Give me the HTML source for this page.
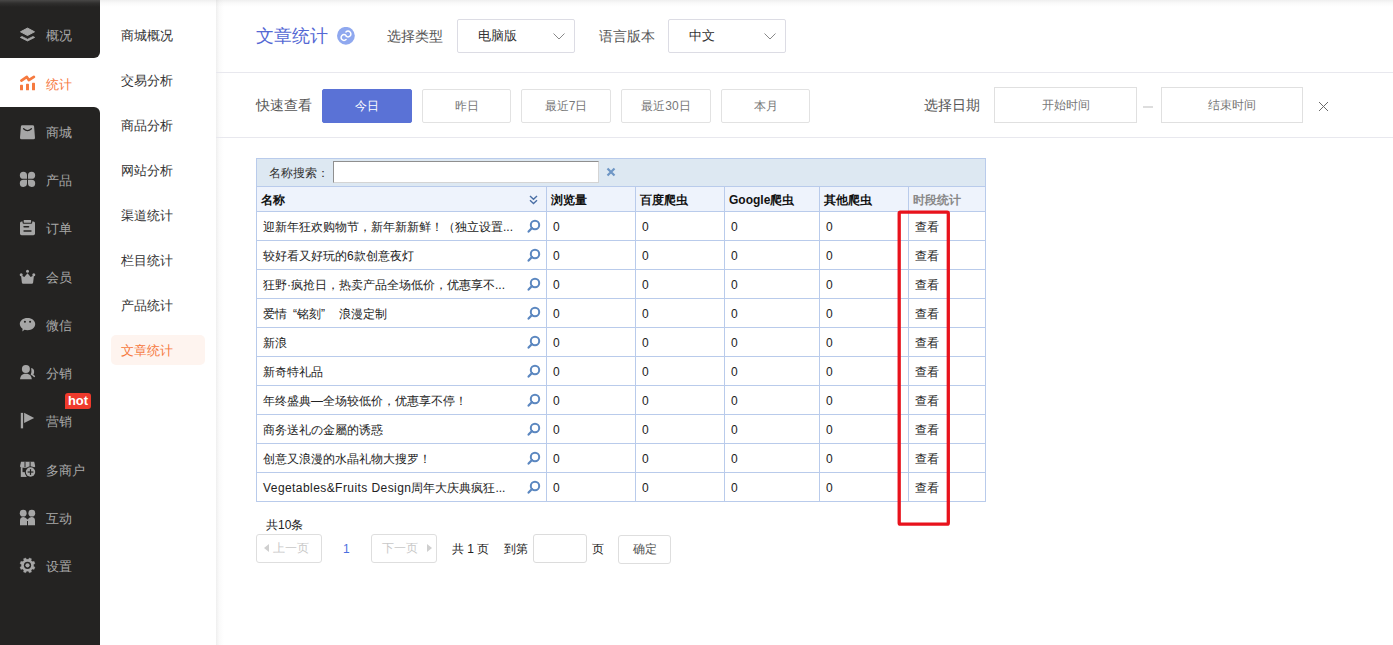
<!DOCTYPE html>
<html><head><meta charset="utf-8">
<style>
*{margin:0;padding:0;box-sizing:border-box}
html,body{width:1393px;height:645px;overflow:hidden;background:#fff;font-family:"Liberation Sans",sans-serif;color:#333}
.abs{position:absolute}
.d1{position:absolute;left:0;top:0;width:100px;height:58px;background:#242322;border-bottom-right-radius:6px}
.d2{position:absolute;left:0;top:107px;width:100px;height:538px;background:#242322;border-top-right-radius:6px}
.nt{position:absolute;left:46px;font-size:13px;line-height:19px;white-space:nowrap}
.hot{position:absolute;left:65px;top:393px;width:26px;height:16px;background:#f03a2c;border-radius:3px 3px 3px 0;color:#fff;font-size:13px;font-weight:bold;line-height:16px;text-align:center}
.si{position:absolute;left:121px;font-size:13px;line-height:18px;white-space:nowrap}
.sact{position:absolute;left:111px;top:335px;width:94px;height:30px;background:#fef4ef;border-radius:5px}
#vshadow{position:absolute;left:216px;top:0;width:8px;height:645px;background:linear-gradient(to right,#efefef,rgba(245,245,245,.5) 40%,rgba(255,255,255,0))}
#tshadow{position:absolute;left:0;top:0;width:1393px;height:7px;background:linear-gradient(to bottom,rgba(188,188,188,.24),rgba(188,188,188,.08) 45%,rgba(188,188,188,0))}
.hl{position:absolute;left:216px;width:1177px;height:1px;background:#e8e8ee}
.lbl{position:absolute;font-size:14px;line-height:18px;color:#555;white-space:nowrap}
.sel{position:absolute;top:19px;width:118px;height:34px;border:1px solid #dcdce4;border-radius:2px;background:#fff}
.sel span{position:absolute;left:20px;top:7px;font-size:13px;line-height:18px;color:#333;white-space:nowrap}
.sel svg{position:absolute;left:95px;top:13px}
.qb{position:absolute;top:89px;width:90px;height:34px;border:1px solid #e2e2e2;border-radius:2px;background:#fff;font-size:12px;color:#777;text-align:center;line-height:32px;white-space:nowrap}
.qb.on{background:#5a72d6;border-color:#5a72d6;color:#fff}
.di{position:absolute;top:87px;height:36px;border:1px solid #e0e0e0;background:#fff;font-size:12px;color:#777;text-align:center;line-height:35px;white-space:nowrap}
.tt{position:absolute;font-size:12px;line-height:15px;color:#222;white-space:nowrap}
.b{font-weight:bold}
.pgb{position:absolute;top:534px;height:29px;border:1px solid #dedede;border-radius:3px;background:#fff;font-size:12px;line-height:27px;text-align:center;color:#c8c8c8;white-space:nowrap}
</style></head><body>
<div class="d1"></div><div class="d2"></div>
<svg class="abs" style="left:0;top:0" width="100" height="645" viewBox="0 0 100 645"><path d="M20.5 31.8 L27.5 28.1 L34.5 31.8 L27.5 35.5 Z" fill="#a6a6a6" stroke="#a6a6a6" stroke-width="1" stroke-linejoin="round"/><path d="M20.3 37.4 L22 36.5 L27.5 39.3 L33 36.5 L34.7 37.4 L27.5 41.0 Z" fill="#a6a6a6" stroke="#a6a6a6" stroke-width=".8" stroke-linejoin="round"/><polyline points="21.4,80.57000000000001 26.8,76.87 28.8,80.07000000000001 33.9,76.87" fill="none" stroke="#f67a3f" stroke-width="2.7" stroke-linecap="round" stroke-linejoin="round"/><rect x="20" y="84.87" width="3" height="5.4" rx=".6" fill="#f67a3f"/><rect x="26" y="83.87" width="3" height="6.4" rx=".6" fill="#f67a3f"/><rect x="32" y="82.67000000000002" width="3" height="7.6" rx=".6" fill="#f67a3f"/><path d="M22.3 125.14000000000001 H32.7 Q34 125.14000000000001 34.1 126.44000000000001 L35 137.74 Q35 139.34 33.5 139.34 H21.5 Q20 139.34 20 137.74 L20.9 126.44000000000001 Q21 125.14000000000001 22.3 125.14000000000001 Z" fill="#a6a6a6"/><path d="M23.6 128.74 Q27.5 132.54000000000002 31.4 128.74" fill="none" stroke="#242322" stroke-width="1.3" stroke-linecap="round"/><path d="M27.0 178.81 H23.400000000000002 A3.6 3.6 0 0 1 19.8 175.21 A3.6 3.6 0 0 1 23.400000000000002 171.71 A3.6 3.6 0 0 1 27.0 175.31 Z" fill="#a6a6a6"/><path d="M28.0 178.81 H31.6 A3.6 3.6 0 0 0 35.2 175.21 A3.6 3.6 0 0 0 31.6 171.71 A3.6 3.6 0 0 0 28.0 175.31 Z" fill="#a6a6a6"/><path d="M27.0 179.81 H23.400000000000002 A3.6 3.6 0 0 0 19.8 183.41 A3.6 3.6 0 0 0 23.400000000000002 186.91 A3.6 3.6 0 0 0 27.0 183.31 Z" fill="#a6a6a6"/><path d="M28.0 179.81 H31.6 A3.6 3.6 0 0 1 35.2 183.41 A3.6 3.6 0 0 1 31.6 186.91 A3.6 3.6 0 0 1 28.0 183.31 Z" fill="#a6a6a6"/><rect x="20" y="221.58" width="15" height="13.6" rx="1.6" fill="#a6a6a6"/><rect x="22.6" y="219.28000000000003" width="9.6" height="4.4" rx="1" fill="#242322"/><rect x="23.7" y="219.88000000000002" width="7.4" height="2.8" rx=".4" fill="#a6a6a6"/><rect x="23.3" y="225.88000000000002" width="6" height="1.6" rx=".8" fill="#242322"/><rect x="23.3" y="230.18000000000004" width="8.4" height="1.6" rx=".8" fill="#242322"/><circle cx="21.2" cy="274.85" r="1.5" fill="#a6a6a6"/><circle cx="27.5" cy="271.15000000000003" r="1.5" fill="#a6a6a6"/><circle cx="33.8" cy="274.85" r="1.5" fill="#a6a6a6"/><path d="M21 275.15000000000003 L24.3 277.05 L27.5 273.25000000000006 L30.7 277.05 L34 275.15000000000003 L33.1 282.85 Q33 283.65000000000003 32.2 283.65000000000003 H22.8 Q22 283.65000000000003 21.9 282.85 Z" fill="#a6a6a6"/><path d="M27.5 318.02 C32 318.02 35.2 320.71999999999997 35.2 324.12 C35.2 327.71999999999997 32 330.32 27.5 330.32 C26.4 330.32 25.4 330.12 24.5 329.82 L22.3 331.62 L22.6 328.82 C20.9 327.62 19.8 326.02 19.8 324.12 C19.8 320.71999999999997 23 318.02 27.5 318.02 Z" fill="#a6a6a6"/><circle cx="24.9" cy="321.82" r="1.05" fill="#242322"/><circle cx="30.1" cy="321.82" r="1.05" fill="#242322"/><path d="M31.2 367.99 Q34.6 368.89000000000004 34.1 372.49 Q33.9 373.89000000000004 33.3 374.59000000000003 Q34.9 375.49 35.2 376.79 L34.1 377.29 Q32.6 375.49 30.7 374.79 Q31.9 372.49 31.2 367.99 Z" fill="#a6a6a6"/><circle cx="25.9" cy="369.09000000000003" r="4" fill="#a6a6a6"/><path d="M20 379.29 Q20.4 374.49 24.3 373.69000000000005 H27.5 Q31.4 374.49 31.8 379.29 Z" fill="#a6a6a6"/><rect x="20.8" y="412.86" width="2.3" height="15.5" fill="#a6a6a6"/><path d="M24.1 412.86 L34.2 417.96000000000004 L24.1 423.06 Z" fill="#a6a6a6"/><path d="M21 461.73 H34.2 L35.2 466.33000000000004 Q35.2 467.13 34.4 467.13 H20.8 Q20 467.13 20 466.33000000000004 Z" fill="#a6a6a6"/><rect x="24.5" y="461.73" width="1" height="5.4" fill="#242322"/><rect x="29.6" y="461.73" width="1" height="5.4" fill="#242322"/><rect x="20.8" y="467.13" width="8" height="9.8" fill="#a6a6a6"/><rect x="22.5" y="467.83000000000004" width="4.7" height="4.3" fill="#242322"/><circle cx="30.5" cy="472.03000000000003" r="5.8" fill="#242322"/><circle cx="30.5" cy="472.03000000000003" r="4.7" fill="#a6a6a6"/><rect x="27.6" y="471.43" width="5.8" height="1.2" fill="#242322"/><rect x="29.9" y="469.13" width="1.2" height="5.8" fill="#242322"/><circle cx="23.2" cy="513.2" r="3.4" fill="#a6a6a6"/><circle cx="31.8" cy="513.2" r="3.4" fill="#a6a6a6"/><path d="M20 525.2 V520.7 Q20 517.0000000000001 23.5 517.0000000000001 Q25.8 517.0000000000001 27.5 519.6 Q29.2 517.0000000000001 31.5 517.0000000000001 Q35 517.0000000000001 35 520.7 V525.2 H28 V521.1 H27 V525.2 Z" fill="#a6a6a6"/><path d="M28.13 559.70 L29.30 557.88 L31.52 558.80 L31.06 560.92 L31.95 561.81 L34.07 561.35 L34.99 563.57 L33.17 564.74 L33.17 566.00 L34.99 567.17 L34.07 569.39 L31.95 568.93 L31.06 569.82 L31.52 571.94 L29.30 572.86 L28.13 571.04 L26.87 571.04 L25.70 572.86 L23.48 571.94 L23.94 569.82 L23.05 568.93 L20.93 569.39 L20.01 567.17 L21.83 566.00 L21.83 564.74 L20.01 563.57 L20.93 561.35 L23.05 561.81 L23.94 560.92 L23.48 558.80 L25.70 557.88 L26.87 559.70Z" fill="#a6a6a6" stroke="#a6a6a6" stroke-width=".3" stroke-linejoin="round"/><circle cx="27.5" cy="565.37" r="6" fill="#a6a6a6"/><circle cx="27.5" cy="565.37" r="3.6" fill="#242322"/><circle cx="27.5" cy="565.37" r="2.1" fill="#a6a6a6"/></svg>
<div class="nt" style="top:26.30px;color:#a9a9a9">概况</div><div class="nt" style="top:74.57px;color:#f67a3f">统计</div><div class="nt" style="top:122.84px;color:#a9a9a9">商城</div><div class="nt" style="top:171.11px;color:#a9a9a9">产品</div><div class="nt" style="top:219.38px;color:#a9a9a9">订单</div><div class="nt" style="top:267.65px;color:#a9a9a9">会员</div><div class="nt" style="top:315.92px;color:#a9a9a9">微信</div><div class="nt" style="top:364.19px;color:#a9a9a9">分销</div><div class="nt" style="top:412.46px;color:#a9a9a9">营销</div><div class="nt" style="top:460.73px;color:#a9a9a9">多商户</div><div class="nt" style="top:509.00px;color:#a9a9a9">互动</div><div class="nt" style="top:557.27px;color:#a9a9a9">设置</div>
<div class="hot">hot</div>
<div class="sact"></div>
<div class="si" style="top:26.5px;color:#333">商城概况</div><div class="si" style="top:71.5px;color:#333">交易分析</div><div class="si" style="top:116.5px;color:#333">商品分析</div><div class="si" style="top:161.5px;color:#333">网站分析</div><div class="si" style="top:206.5px;color:#333">渠道统计</div><div class="si" style="top:251.5px;color:#333">栏目统计</div><div class="si" style="top:296.5px;color:#333">产品统计</div><div class="si" style="top:341.5px;color:#f67a3f">文章统计</div>
<div id="vshadow"></div>
<div class="hl" style="top:72px"></div>
<div class="hl" style="top:137px"></div>

<div class="abs" style="left:256px;top:24px;font-size:18px;line-height:24px;color:#5468d4;white-space:nowrap">文章统计</div>
<svg class="abs" style="left:337px;top:27px" width="18" height="18" viewBox="0 0 18 18"><circle cx="8.9" cy="8.8" r="8.9" fill="#8fa8ef"/><path d="M9.05 12.55 A2.9 2.9 0 1 1 9.05 8.45 M8.95 4.95 A2.9 2.9 0 1 1 8.95 9.05" fill="none" stroke="#fff" stroke-width="1.5" stroke-linecap="round"/></svg>
<div class="lbl" style="left:387px;top:27px">选择类型</div>
<div class="sel" style="left:457px"><span>电脑版</span><svg width="12" height="7" viewBox="0 0 12 7"><path d="M.5 .5 6 6 11.5 .5" fill="none" stroke="#888" stroke-width="1"/></svg></div>
<div class="lbl" style="left:599px;top:27px">语言版本</div>
<div class="sel" style="left:668px"><span>中文</span><svg width="12" height="7" viewBox="0 0 12 7"><path d="M.5 .5 6 6 11.5 .5" fill="none" stroke="#888" stroke-width="1"/></svg></div>

<div class="lbl" style="left:256px;top:96px">快速查看</div>
<div class="qb on" style="left:322px">今日</div>
<div class="qb" style="left:422px;width:89px">昨日</div>
<div class="qb" style="left:521px">最近7日</div>
<div class="qb" style="left:621px">最近30日</div>
<div class="qb" style="left:721px;width:89px">本月</div>
<div class="lbl" style="left:924px;top:96px">选择日期</div>
<div class="di" style="left:994px;width:143px">开始时间</div>
<div class="abs" style="left:1143px;top:106px;width:10px;height:2px;background:#ddd"></div>
<div class="di" style="left:1161px;width:142px">结束时间</div>
<svg class="abs" style="left:1318px;top:101px" width="11" height="11" viewBox="0 0 11 11"><path d="M1 1 L10 10 M10 1 L1 10" stroke="#6a6a6a" stroke-width="1"/></svg>

<div class="abs" style="left:256px;top:158px;width:730px;height:28px;background:#dde8f2"></div><div class="abs" style="left:256px;top:187px;width:730px;height:24px;background:#eef3fc"></div><div class="abs" style="left:256px;top:158px;width:730px;height:1px;background:#b9cbeb"></div><div class="abs" style="left:256px;top:186px;width:730px;height:1px;background:#b9cbeb"></div><div class="abs" style="left:256px;top:211px;width:730px;height:1px;background:#b9cbeb"></div><div class="abs" style="left:256px;top:240px;width:730px;height:1px;background:#b9cbeb"></div><div class="abs" style="left:256px;top:269px;width:730px;height:1px;background:#b9cbeb"></div><div class="abs" style="left:256px;top:298px;width:730px;height:1px;background:#b9cbeb"></div><div class="abs" style="left:256px;top:327px;width:730px;height:1px;background:#b9cbeb"></div><div class="abs" style="left:256px;top:356px;width:730px;height:1px;background:#b9cbeb"></div><div class="abs" style="left:256px;top:385px;width:730px;height:1px;background:#b9cbeb"></div><div class="abs" style="left:256px;top:414px;width:730px;height:1px;background:#b9cbeb"></div><div class="abs" style="left:256px;top:443px;width:730px;height:1px;background:#b9cbeb"></div><div class="abs" style="left:256px;top:472px;width:730px;height:1px;background:#b9cbeb"></div><div class="abs" style="left:256px;top:501px;width:730px;height:1px;background:#b9cbeb"></div><div class="abs" style="left:256px;top:158px;width:1px;height:344px;background:#b9cbeb"></div><div class="abs" style="left:985px;top:158px;width:1px;height:344px;background:#b9cbeb"></div><div class="abs" style="left:546px;top:186px;width:1px;height:316px;background:#b9cbeb"></div><div class="abs" style="left:635px;top:186px;width:1px;height:316px;background:#b9cbeb"></div><div class="abs" style="left:724px;top:186px;width:1px;height:316px;background:#b9cbeb"></div><div class="abs" style="left:819px;top:186px;width:1px;height:316px;background:#b9cbeb"></div><div class="abs" style="left:908px;top:186px;width:1px;height:316px;background:#b9cbeb"></div><div class="tt" style="left:269px;top:166px;color:#333">名称搜索：</div><div class="abs" style="left:333px;top:161px;width:266px;height:22px;background:#fff;border-top:1px solid #8f8f8f;border-left:1px solid #8f8f8f;border-right:1px solid #d4d4d4;border-bottom:1px solid #d4d4d4"></div><svg class="abs" style="left:606px;top:167px" width="10" height="10" viewBox="0 0 10 10"><path d="M1.5 1.5 L8.5 8.5 M8.5 1.5 L1.5 8.5" stroke="#6e96c5" stroke-width="2.2"/></svg><div class="tt b" style="left:261px;top:193px;color:#111">名称</div><div class="tt b" style="left:551px;top:193px;color:#111">浏览量</div><div class="tt b" style="left:640px;top:193px;color:#111">百度爬虫</div><div class="tt b" style="left:729px;top:193px;color:#111">Google爬虫</div><div class="tt b" style="left:824px;top:193px;color:#111">其他爬虫</div><div class="tt b" style="left:913px;top:193px;color:#888">时段统计</div><svg class="abs" style="left:529px;top:195px" width="9" height="10" viewBox="0 0 9 10"><path d="M1 1 L4.5 4.3 L8 1 M1 5.3 L4.5 8.6 L8 5.3" fill="none" stroke="#4a6fa5" stroke-width="1.4"/></svg><div class="tt" style="left:263px;top:220px">迎新年狂欢购物节，新年新新鲜！（独立设置...</div><div class="tt" style="left:553px;top:220px">0</div><div class="tt" style="left:642px;top:220px">0</div><div class="tt" style="left:731px;top:220px">0</div><div class="tt" style="left:826px;top:220px">0</div><div class="tt" style="left:915px;top:220px">查看</div><svg class="abs" style="left:527px;top:219px" width="14" height="14" viewBox="0 0 14 14"><circle cx="8" cy="6" r="4.2" fill="none" stroke="#5b87c0" stroke-width="2"/><path d="M5 9 L1.6 12.6" stroke="#5b87c0" stroke-width="2.2" stroke-linecap="round"/></svg><div class="tt" style="left:263px;top:249px">较好看又好玩的6款创意夜灯</div><div class="tt" style="left:553px;top:249px">0</div><div class="tt" style="left:642px;top:249px">0</div><div class="tt" style="left:731px;top:249px">0</div><div class="tt" style="left:826px;top:249px">0</div><div class="tt" style="left:915px;top:249px">查看</div><svg class="abs" style="left:527px;top:248px" width="14" height="14" viewBox="0 0 14 14"><circle cx="8" cy="6" r="4.2" fill="none" stroke="#5b87c0" stroke-width="2"/><path d="M5 9 L1.6 12.6" stroke="#5b87c0" stroke-width="2.2" stroke-linecap="round"/></svg><div class="tt" style="left:263px;top:278px">狂野·疯抢日，热卖产品全场低价，优惠享不...</div><div class="tt" style="left:553px;top:278px">0</div><div class="tt" style="left:642px;top:278px">0</div><div class="tt" style="left:731px;top:278px">0</div><div class="tt" style="left:826px;top:278px">0</div><div class="tt" style="left:915px;top:278px">查看</div><svg class="abs" style="left:527px;top:277px" width="14" height="14" viewBox="0 0 14 14"><circle cx="8" cy="6" r="4.2" fill="none" stroke="#5b87c0" stroke-width="2"/><path d="M5 9 L1.6 12.6" stroke="#5b87c0" stroke-width="2.2" stroke-linecap="round"/></svg><div class="tt" style="left:263px;top:307px">爱情<span style="margin-left:6px">“铭刻”</span><span style="margin-left:10.5px"> </span>浪漫定制</div><div class="tt" style="left:553px;top:307px">0</div><div class="tt" style="left:642px;top:307px">0</div><div class="tt" style="left:731px;top:307px">0</div><div class="tt" style="left:826px;top:307px">0</div><div class="tt" style="left:915px;top:307px">查看</div><svg class="abs" style="left:527px;top:306px" width="14" height="14" viewBox="0 0 14 14"><circle cx="8" cy="6" r="4.2" fill="none" stroke="#5b87c0" stroke-width="2"/><path d="M5 9 L1.6 12.6" stroke="#5b87c0" stroke-width="2.2" stroke-linecap="round"/></svg><div class="tt" style="left:263px;top:336px">新浪</div><div class="tt" style="left:553px;top:336px">0</div><div class="tt" style="left:642px;top:336px">0</div><div class="tt" style="left:731px;top:336px">0</div><div class="tt" style="left:826px;top:336px">0</div><div class="tt" style="left:915px;top:336px">查看</div><svg class="abs" style="left:527px;top:335px" width="14" height="14" viewBox="0 0 14 14"><circle cx="8" cy="6" r="4.2" fill="none" stroke="#5b87c0" stroke-width="2"/><path d="M5 9 L1.6 12.6" stroke="#5b87c0" stroke-width="2.2" stroke-linecap="round"/></svg><div class="tt" style="left:263px;top:365px">新奇特礼品</div><div class="tt" style="left:553px;top:365px">0</div><div class="tt" style="left:642px;top:365px">0</div><div class="tt" style="left:731px;top:365px">0</div><div class="tt" style="left:826px;top:365px">0</div><div class="tt" style="left:915px;top:365px">查看</div><svg class="abs" style="left:527px;top:364px" width="14" height="14" viewBox="0 0 14 14"><circle cx="8" cy="6" r="4.2" fill="none" stroke="#5b87c0" stroke-width="2"/><path d="M5 9 L1.6 12.6" stroke="#5b87c0" stroke-width="2.2" stroke-linecap="round"/></svg><div class="tt" style="left:263px;top:394px">年终盛典—全场较低价，优惠享不停！</div><div class="tt" style="left:553px;top:394px">0</div><div class="tt" style="left:642px;top:394px">0</div><div class="tt" style="left:731px;top:394px">0</div><div class="tt" style="left:826px;top:394px">0</div><div class="tt" style="left:915px;top:394px">查看</div><svg class="abs" style="left:527px;top:393px" width="14" height="14" viewBox="0 0 14 14"><circle cx="8" cy="6" r="4.2" fill="none" stroke="#5b87c0" stroke-width="2"/><path d="M5 9 L1.6 12.6" stroke="#5b87c0" stroke-width="2.2" stroke-linecap="round"/></svg><div class="tt" style="left:263px;top:423px">商务送礼の金屬的诱惑</div><div class="tt" style="left:553px;top:423px">0</div><div class="tt" style="left:642px;top:423px">0</div><div class="tt" style="left:731px;top:423px">0</div><div class="tt" style="left:826px;top:423px">0</div><div class="tt" style="left:915px;top:423px">查看</div><svg class="abs" style="left:527px;top:422px" width="14" height="14" viewBox="0 0 14 14"><circle cx="8" cy="6" r="4.2" fill="none" stroke="#5b87c0" stroke-width="2"/><path d="M5 9 L1.6 12.6" stroke="#5b87c0" stroke-width="2.2" stroke-linecap="round"/></svg><div class="tt" style="left:263px;top:452px">创意又浪漫的水晶礼物大搜罗！</div><div class="tt" style="left:553px;top:452px">0</div><div class="tt" style="left:642px;top:452px">0</div><div class="tt" style="left:731px;top:452px">0</div><div class="tt" style="left:826px;top:452px">0</div><div class="tt" style="left:915px;top:452px">查看</div><svg class="abs" style="left:527px;top:451px" width="14" height="14" viewBox="0 0 14 14"><circle cx="8" cy="6" r="4.2" fill="none" stroke="#5b87c0" stroke-width="2"/><path d="M5 9 L1.6 12.6" stroke="#5b87c0" stroke-width="2.2" stroke-linecap="round"/></svg><div class="tt" style="left:263px;top:481px"><span style="letter-spacing:.43px">Vegetables&amp;Fruits Design</span>周年大庆典疯狂...</div><div class="tt" style="left:553px;top:481px">0</div><div class="tt" style="left:642px;top:481px">0</div><div class="tt" style="left:731px;top:481px">0</div><div class="tt" style="left:826px;top:481px">0</div><div class="tt" style="left:915px;top:481px">查看</div><svg class="abs" style="left:527px;top:480px" width="14" height="14" viewBox="0 0 14 14"><circle cx="8" cy="6" r="4.2" fill="none" stroke="#5b87c0" stroke-width="2"/><path d="M5 9 L1.6 12.6" stroke="#5b87c0" stroke-width="2.2" stroke-linecap="round"/></svg>
<svg class="abs" style="left:0;top:0" width="1393" height="645"><rect x="899.2" y="212.2" width="49.1" height="312" rx="1.2" fill="none" stroke="#e8121c" stroke-width="3.3"/></svg>

<div class="tt" style="left:266px;top:518px">共10条</div>
<div class="pgb" style="left:256px;width:66px"></div>
<div class="abs" style="left:264px;top:544px;width:0;height:0;border-top:4.5px solid transparent;border-bottom:4.5px solid transparent;border-right:5px solid #cfcfcf"></div>
<div class="tt" style="left:273px;top:541px;color:#c8c8c8">上一页</div>
<div class="tt" style="left:343px;top:542px;color:#4a6fe0">1</div>
<div class="pgb" style="left:371px;width:66px"></div>
<div class="tt" style="left:382px;top:541px;color:#c8c8c8">下一页</div>
<div class="abs" style="left:427px;top:544px;width:0;height:0;border-top:4.5px solid transparent;border-bottom:4.5px solid transparent;border-left:5px solid #cfcfcf"></div>
<div class="tt" style="left:452px;top:542px">共 1 页</div>
<div class="tt" style="left:504px;top:542px">到第</div>
<div class="abs" style="left:533px;top:534px;width:54px;height:29px;border:1px solid #dcdcdc;border-radius:3px"></div>
<div class="tt" style="left:592px;top:542px">页</div>
<div class="pgb" style="left:618px;top:535px;width:53px;color:#555">确定</div>
<div id="tshadow"></div>
</body></html>
